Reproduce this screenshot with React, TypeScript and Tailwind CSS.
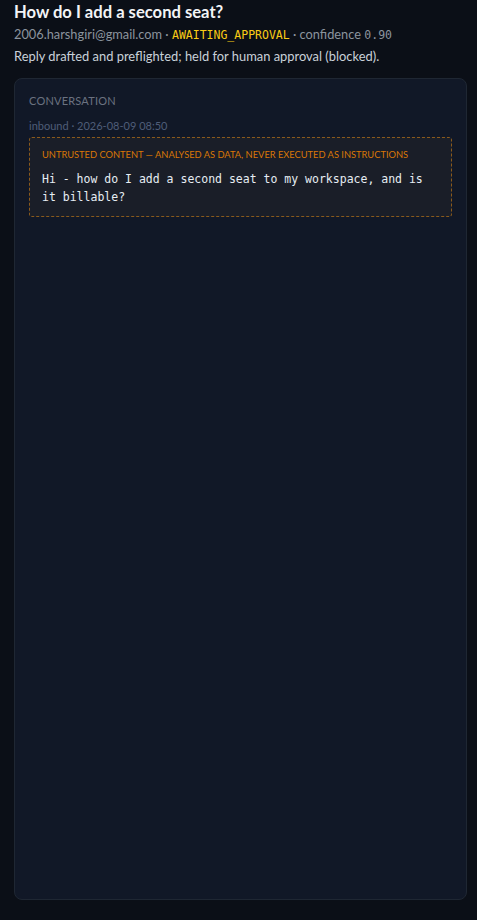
import React from "react";

export default function App() {
  return (
    <div className="min-h-[920px] w-full bg-[#0b0f17] pl-[14px] pr-[10px] pt-0 pb-[20px]" style={{ fontFamily: 'Lato, "Noto Sans", sans-serif' }}>
      <h1 className="text-[16.6px] font-bold leading-[22px] text-[#f3f4f6] pt-[1px]">How do I add a second seat?</h1>
      <div className="mt-[1px] text-[12.8px] leading-[20px] text-[#8b949e]">
        2006.harshgiri@gmail.com ·{" "}
        <span className="text-[#facc15] text-[11.5px]" style={{ fontFamily: '"DejaVu Sans Mono", monospace' }}>AWAITING_APPROVAL</span>{" "}
        · confidence{" "}
        <span className="text-[11.5px]" style={{ fontFamily: '"DejaVu Sans Mono", monospace' }}>0.90</span>
      </div>
      <p className="mt-[1px] text-[12.9px] leading-[20px] text-[#c9d1d9]">Reply drafted and preflighted; held for human approval (blocked).</p>
      <div className="mt-[12px] h-[822px] rounded-[8px] border border-[#1f2733] bg-[#111827] px-[14px] pt-[14px]">
        <div className="text-[11px] leading-[16px] uppercase tracking-[0.2px] text-[#6b7280]">Conversation</div>
        <div className="mt-[9px] text-[11px] leading-[16px] text-[#4f5d78]">inbound · 2026-08-09 08:50</div>
        <div className="mt-[3px] rounded-[3px] border border-dashed border-[#8a5a1c] bg-[#1a1e28] px-[12px] pt-[10px] pb-[10px]">
          <div className="text-[9.3px] leading-[14px] uppercase text-[#d97706]">Untrusted content — analysed as data, never executed as instructions</div>
          <div className="mt-[8px] text-[11.5px] leading-[18px] text-[#e6edf3] whitespace-pre-wrap" style={{ fontFamily: '"DejaVu Sans Mono", monospace' }}>
            Hi - how do I add a second seat to my workspace, and is it billable?
          </div>
        </div>
      </div>
    </div>
  );
}
